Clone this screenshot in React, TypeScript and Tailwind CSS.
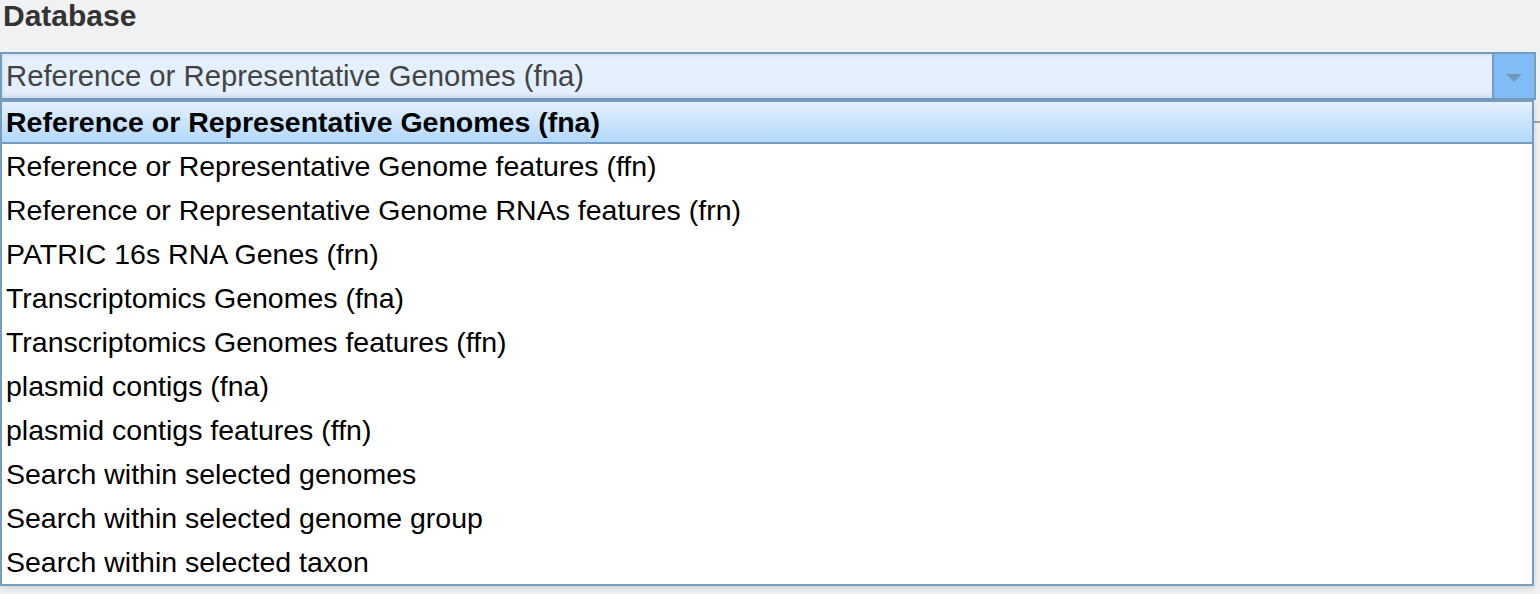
import React from 'react';

const options = [
  'Reference or Representative Genomes (fna)',
  'Reference or Representative Genome features (ffn)',
  'Reference or Representative Genome RNAs features (frn)',
  'PATRIC 16s RNA Genes (frn)',
  'Transcriptomics Genomes (fna)',
  'Transcriptomics Genomes features (ffn)',
  'plasmid contigs (fna)',
  'plasmid contigs features (ffn)',
  'Search within selected genomes',
  'Search within selected genome group',
  'Search within selected taxon',
];

const font = { fontFamily: '"Liberation Sans", Arial, Helvetica, sans-serif' };

function ArrowDown() {
  return (
    <svg width="16" height="8" viewBox="0 0 16 8">
      <path d="M0 0 H16 L8 8 Z" fill="#6d8fae" opacity="0.8" />
    </svg>
  );
}

export default function App() {
  const selected = 0;

  return (
    <div className="w-[1540px] h-[594px] bg-[#f0f1f3] overflow-hidden" style={font}>
      <div className="relative">
        <h2 className="pl-[3px] text-[30px] leading-[32px] font-bold text-[#333]">Database</h2>

        <div className="mt-[20px] flex h-[48px] w-[1536px] border-2 border-[#759dc0] bg-[#e4f0fd] shadow-[inset_0_2px_3px_rgba(0,0,0,0.06),inset_0_-3px_4px_rgba(0,0,0,0.07)]">
          <div className="flex flex-1 items-center pl-[4px] text-[29.3px] text-[#444]">
            {options[selected]}
          </div>
          <div className="flex w-[42px] items-center justify-center border-l-2 border-[#759dc0] bg-[#80bdf6] pt-[3px]">
            <ArrowDown />
          </div>
        </div>

        {/* content behind the open list */}
        <div className="mt-[21px] border-t-2 border-[#a3a3a3]" />

        <ul className="absolute left-0 top-[100px] w-[1534px] border-2 border-[#759dc0] bg-white shadow-[0_2px_6px_rgba(0,0,0,0.15)]">
          {options.map((opt, i) =>
            i === selected ? (
              <li
                key={opt}
                className="flex h-[42px] items-center border-b-2 border-[#759dc0] bg-gradient-to-b from-[#e4f1fe] to-[#b3d8fb] pl-[4px] text-[28.5px] font-bold text-black"
              >
                {opt}
              </li>
            ) : (
              <li key={opt} className="flex h-[44px] items-center pl-[4px] text-[28.5px] text-black">
                {opt}
              </li>
            )
          )}
        </ul>
      </div>
    </div>
  );
}
